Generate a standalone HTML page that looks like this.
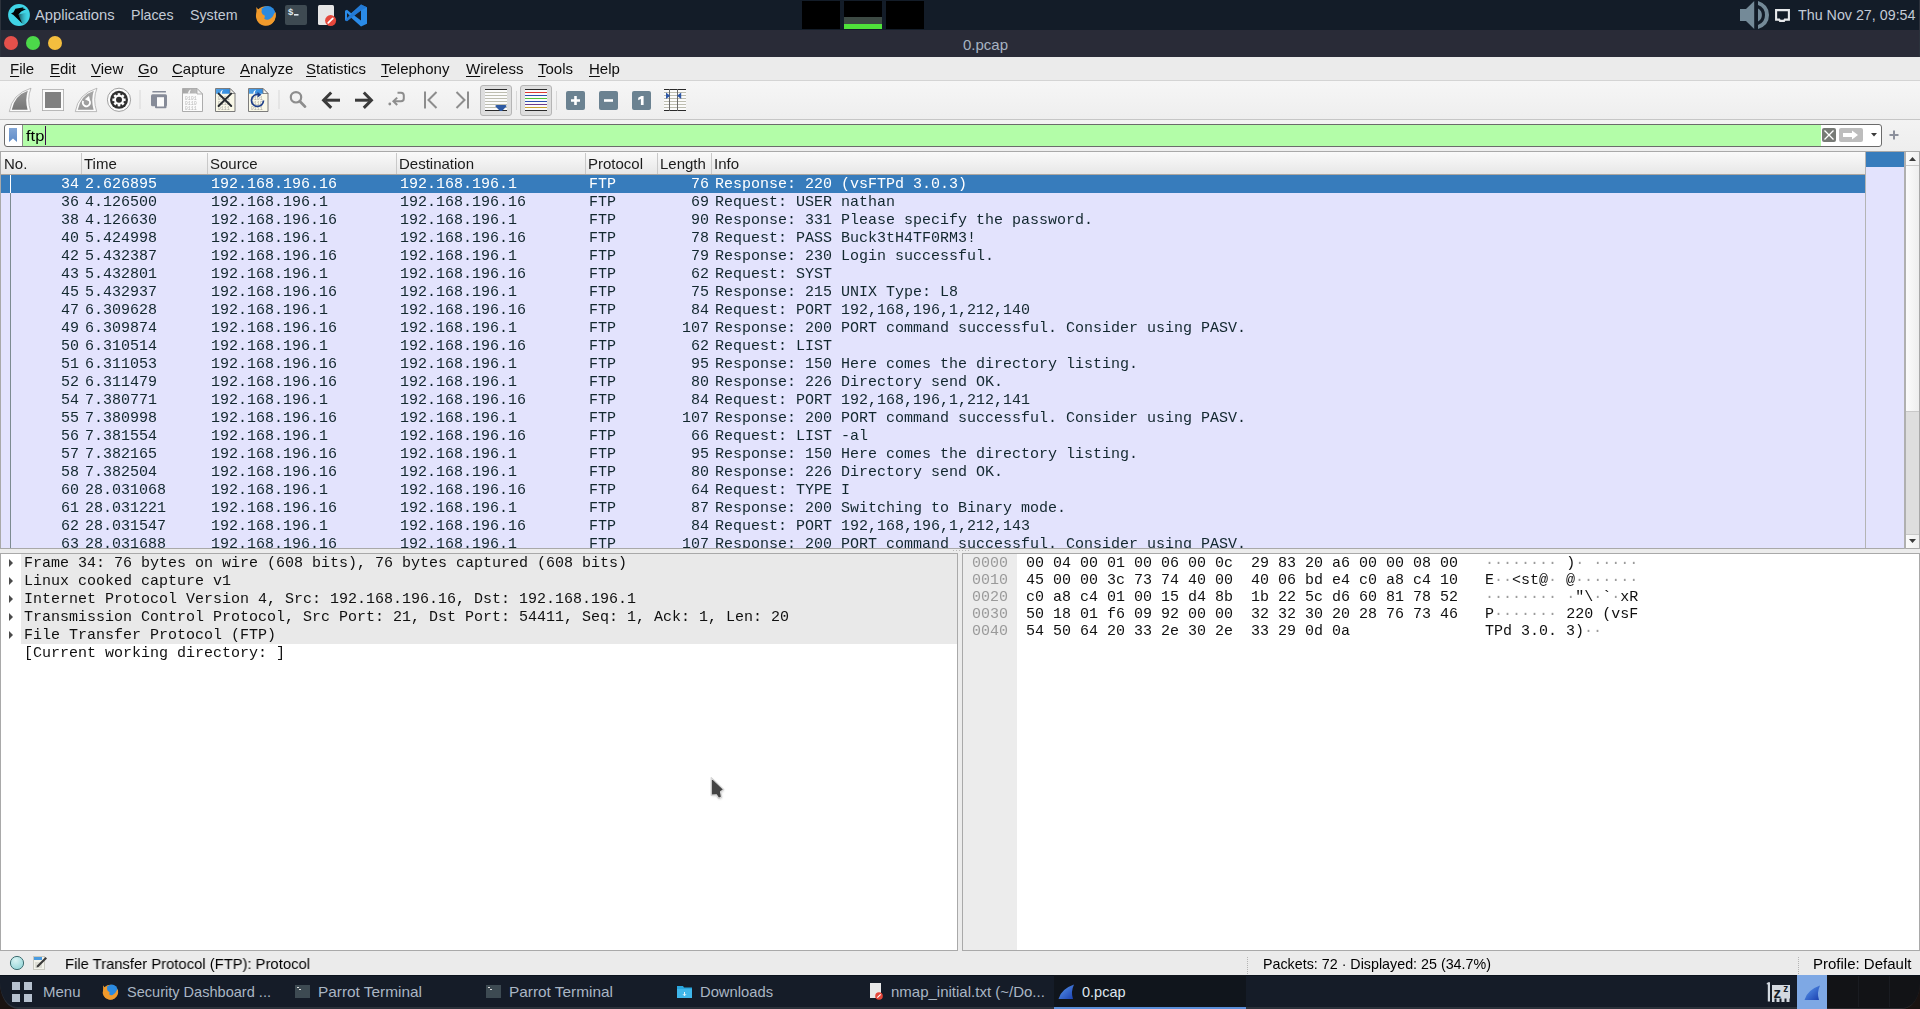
<!DOCTYPE html><html><head><meta charset="utf-8"><style>
*{margin:0;padding:0;box-sizing:border-box}
html,body{width:1920px;height:1009px;overflow:hidden;background:#fff;font-family:"Liberation Sans",sans-serif}
.a{position:absolute}
.t{position:absolute;white-space:pre;font-size:15px;line-height:15px;height:15px}
.m{position:absolute;white-space:pre;font-family:"Liberation Mono",monospace;font-size:15px;line-height:15px;height:15px}
svg{position:absolute;overflow:visible}
</style></head><body><div class="a" style="left:0px;top:0px;width:1920px;height:30px;background:#131c28"></div>
<svg style="left:8px;top:4px" width="22" height="22" viewBox="0 0 22 22"><defs><linearGradient id="pg" x1="0" y1="0" x2="1" y2="0"><stop offset="0" stop-color="#0e3a44" stop-opacity="0.9"/><stop offset="1" stop-color="#40d4e6" stop-opacity="0"/></linearGradient><clipPath id="pc"><circle cx="11" cy="11" r="10.9"/></clipPath></defs><circle cx="11" cy="11" r="10.9" fill="#40d4e6"/><path clip-path="url(#pc)" d="M10.4 10.4 L14.2 19.5 L19 22 L21 8 Z" fill="url(#pg)"/><path d="M3 9.6 L5.5 8.3 L7.4 4.8 L13 3.7 L15.8 3.2 L14.6 4.3 L17.9 5.2 L13.2 7.6 L10.5 10.4 L14.2 19.5 L5.2 10.7 Z" fill="#020405"/></svg>
<div class="t" style="left:35px;top:7px;color:#c3cbd6;font-size:15px;line-height:15px;transform:scaleX(0.9830);transform-origin:0 0;">Applications</div>
<div class="t" style="left:131px;top:7px;color:#c3cbd6;font-size:15px;line-height:15px;transform:scaleX(0.9441);transform-origin:0 0;">Places</div>
<div class="t" style="left:190px;top:7px;color:#c3cbd6;font-size:15px;line-height:15px;transform:scaleX(0.9497);transform-origin:0 0;">System</div>
<svg style="left:255px;top:4px" width="22" height="22" viewBox="0 0 22 22"><path d="M11 2.2 A9.8 9.8 0 1 1 1.6 8.5 L1.3 3 L3.3 5.4 Q6.5 2.2 11 2.2Z" fill="#f09a2c"/><circle cx="12.6" cy="9.6" r="7.6" fill="#2b8ae0"/><path d="M1.5 8.5 Q2.5 5 5 4.6 L6.8 5.5 Q5.8 8.5 7.5 10.2 L9.6 11.5 Q10.5 13.5 9 14.3 Q11 16.6 13.8 15.4 Q17.6 13.8 19.2 9.4 L20.7 8 Q21.6 12.8 19.5 16.4 Q16.5 21.2 10.8 21.2 Q5 21 2.4 16 Q0.8 12.5 1.5 8.5Z" fill="#f09a2c"/></svg>
<div class="a" style="left:285px;top:5px;width:22px;height:20px;background:#3e4a52;border-radius:2px"></div>
<svg style="left:285px;top:5px" width="22" height="20" viewBox="0 0 22 20"><text x="3" y="9.8" font-family="Liberation Sans" font-weight="bold" font-size="9.5" fill="#dfe8ee">$</text><rect x="9" y="9" width="4.5" height="1.6" fill="#dfe8ee"/></svg>
<div class="a" style="left:318px;top:5px;width:16px;height:20px;background:#e6e6e6;border-radius:1.5px"></div>
<svg style="left:325px;top:15px" width="11" height="11" viewBox="0 0 11 11"><circle cx="5.6" cy="5.6" r="5.5" fill="#e5473b"/><path d="M3.2 7.8 L7.8 3.3" stroke="#fff" stroke-width="1.7" stroke-linecap="round"/></svg>
<svg style="left:344px;top:4px" width="24" height="23" viewBox="0 0 24 23"><path d="M17 0.5 L23 3.2 V19.8 L17 22.5 L7.2 13.8 L3 17.2 L1 16.2 V6.8 L3 5.8 L7.2 9.2 Z M17 6.5 L10.3 11.5 L17 16.5 Z M3 9 V14 L5.6 11.5 Z" fill="#2a8be8" fill-rule="evenodd"/><path d="M17 0.5 L23 3.2 L17 6.5 L3 17.2 L1 16.2 Z" fill="#1f72cc" opacity="0.7"/></svg>
<div class="a" style="left:802px;top:1px;width:38px;height:28px;background:#000"></div>
<div class="a" style="left:844px;top:1px;width:38px;height:28px;background:#000"></div>
<div class="a" style="left:844px;top:17px;width:38px;height:7px;background:#3d4a44"></div>
<div class="a" style="left:844px;top:24px;width:38px;height:5px;background:#4fe33a"></div>
<div class="a" style="left:886px;top:1px;width:38px;height:28px;background:#000"></div>
<svg style="left:1735px;top:0" width="60" height="30" viewBox="1735 0 60 30"><path d="M1740 9 H1746 L1754.2 1 V29 L1746 21 H1740 Z" fill="#748a98"/><path d="M1758 8.6 Q1761.9 10.8 1761.9 15 Q1761.9 19.2 1758 21.4 Z" fill="#748a98"/><path d="M1758 1 Q1769 4.5 1769 15 Q1769 25.5 1758 29 V25 Q1765 22.5 1765 15 Q1765 7.5 1758 5 Z" fill="#748a98"/><path d="M1776.1 10.1 H1788.9 V19.6 H1784.8 L1784 20.9 H1780 L1779.2 19.6 H1776.1 Z" fill="none" stroke="#e8eaec" stroke-width="2.1" stroke-linejoin="miter"/></svg>
<div class="t" style="left:1798px;top:7px;color:#c3cbd6;font-size:15px;line-height:15px;transform:scaleX(0.9519);transform-origin:0 0;">Thu Nov 27, 09:54</div>
<div class="a" style="left:0px;top:30px;width:1920px;height:27px;background:#292b37"></div>
<svg style="left:0;top:30px" width="70" height="27"><circle cx="11" cy="13" r="7" fill="#e5504b"/><circle cx="33" cy="13" r="7" fill="#4cd84a"/><circle cx="55" cy="13" r="7" fill="#f4be3e"/></svg>
<div class="t" style="left:963px;top:37px;color:#a7b3c2;font-size:15px;line-height:15px;">0.pcap</div>
<div class="a" style="left:0px;top:0px;width:1px;height:57px;background:#2c323c"></div>
<div class="a" style="left:1919px;top:0px;width:1px;height:57px;background:#2c323c"></div>
<div class="a" style="left:0;top:0;width:1920px;height:1009px;will-change:transform">
<div class="a" style="left:0px;top:57px;width:1920px;height:23px;background:#ebebeb"></div>
<div class="a" style="left:0px;top:80px;width:1920px;height:1px;background:#d4d4d4"></div>
<div class="t" style="left:10px;top:61px;color:#0d0d0d;font-size:15px;line-height:15px;"><span style="text-decoration:underline;text-underline-offset:2px">F</span>ile</div>
<div class="t" style="left:50px;top:61px;color:#0d0d0d;font-size:15px;line-height:15px;"><span style="text-decoration:underline;text-underline-offset:2px">E</span>dit</div>
<div class="t" style="left:91px;top:61px;color:#0d0d0d;font-size:15px;line-height:15px;"><span style="text-decoration:underline;text-underline-offset:2px">V</span>iew</div>
<div class="t" style="left:138px;top:61px;color:#0d0d0d;font-size:15px;line-height:15px;"><span style="text-decoration:underline;text-underline-offset:2px">G</span>o</div>
<div class="t" style="left:172px;top:61px;color:#0d0d0d;font-size:15px;line-height:15px;"><span style="text-decoration:underline;text-underline-offset:2px">C</span>apture</div>
<div class="t" style="left:240px;top:61px;color:#0d0d0d;font-size:15px;line-height:15px;"><span style="text-decoration:underline;text-underline-offset:2px">A</span>nalyze</div>
<div class="t" style="left:306px;top:61px;color:#0d0d0d;font-size:15px;line-height:15px;"><span style="text-decoration:underline;text-underline-offset:2px">S</span>tatistics</div>
<div class="t" style="left:381px;top:61px;color:#0d0d0d;font-size:15px;line-height:15px;"><span style="text-decoration:underline;text-underline-offset:2px">T</span>elephony</div>
<div class="t" style="left:466px;top:61px;color:#0d0d0d;font-size:15px;line-height:15px;"><span style="text-decoration:underline;text-underline-offset:2px">W</span>ireless</div>
<div class="t" style="left:538px;top:61px;color:#0d0d0d;font-size:15px;line-height:15px;"><span style="text-decoration:underline;text-underline-offset:2px">T</span>ools</div>
<div class="t" style="left:589px;top:61px;color:#0d0d0d;font-size:15px;line-height:15px;"><span style="text-decoration:underline;text-underline-offset:2px">H</span>elp</div>
<div class="a" style="left:0px;top:81px;width:1920px;height:39px;background:linear-gradient(#f6f6f6,#eeeeee)"></div>
<div class="a" style="left:0px;top:119px;width:1920px;height:1px;background:#c6c6c6"></div>

<svg style="left:0;top:81px" width="700" height="39" viewBox="0 81 700 39">
<!-- shark fin -->
<defs><linearGradient id="fg1" x1="0" y1="0" x2="0" y2="1"><stop offset="0" stop-color="#959595"/><stop offset="1" stop-color="#767676"/></linearGradient>
<linearGradient id="fg2" x1="0" y1="0" x2="0" y2="1"><stop offset="0" stop-color="#a8a8a8"/><stop offset="1" stop-color="#9a9a9a"/></linearGradient></defs>
<path d="M9.3 111.6 Q12 94 31 88.2 Q26.5 99 30.7 111.6 Z" fill="#fbfbfb" stroke="#aaaaaa" stroke-width="0.8"/>
<path d="M11.8 109.8 Q14.5 95.5 27.8 90.8 Q24.8 100 27.6 109.8 Z" fill="url(#fg1)"/>
<!-- stop -->
<rect x="42.4" y="89.4" width="21.2" height="21.2" fill="#fbfbfb" stroke="#aaaaaa" stroke-width="0.8"/>
<rect x="45" y="92" width="16" height="16" fill="#808080"/>
<!-- restart fin -->
<path d="M75.3 111.6 Q78 94 97 88.2 Q92.5 99 96.7 111.6 Z" fill="#fbfbfb" stroke="#aaaaaa" stroke-width="0.8"/>
<path d="M77.8 109.8 Q80.5 95.5 93.8 90.8 Q90.8 100 93.6 109.8 Z" fill="url(#fg2)"/>
<path d="M83.2 101 A3.6 3.6 0 1 0 88.2 99.5" fill="none" stroke="#fff" stroke-width="1.9"/>
<path d="M85.5 99.2 L88.8 96.5 L89.6 101Z" fill="#fff" stroke="#fff" stroke-width="0.8"/>
<!-- gear -->
<circle cx="119" cy="99.8" r="11.6" fill="#fbfbfb" stroke="#8a8a8a" stroke-width="0.8"/>
<circle cx="119" cy="99.8" r="9" fill="#2e2e2e"/>
<g transform="translate(119 99.8)" fill="#fbfbfb">
<circle r="5"/>
<rect x="-1.3" y="-6.6" width="2.6" height="13.2"/>
<rect x="-6.6" y="-1.3" width="13.2" height="2.6"/>
<rect x="-1.3" y="-6.6" width="2.6" height="13.2" transform="rotate(45)"/>
<rect x="-6.6" y="-1.3" width="13.2" height="2.6" transform="rotate(45)"/>
</g>
<circle cx="119" cy="99.8" r="3" fill="#2e2e2e"/>
<!-- sep -->
<rect x="139.5" y="90" width="1" height="19" fill="#d8d8d8"/>
<!-- open -->
<rect x="152.3" y="91" width="13.7" height="1.6" rx="0.5" fill="#868b98"/>
<rect x="151" y="94.3" width="16" height="12" rx="1.5" fill="#868b98"/>
<rect x="155" y="96" width="11.5" height="12.3" rx="1" fill="#868b98"/>
<rect x="157" y="97.2" width="7" height="9.3" fill="#fbfbfb"/>
<!-- file (save) -->
<defs><linearGradient id="gb" x1="0" y1="0" x2="1" y2="0"><stop offset="0" stop-color="#4f9fe4"/><stop offset="1" stop-color="#2f8ae0"/></linearGradient>
<linearGradient id="gg" x1="0" y1="0" x2="1" y2="0"><stop offset="0" stop-color="#a6a6a6"/><stop offset="1" stop-color="#bdbdbd"/></linearGradient></defs>
<path d="M182.5 88.5 H197 L202.5 94 V111.5 H182.5Z" fill="#fbfbfb" stroke="#a4a4a4" stroke-width="0.9"/>
<path d="M183 89 H196.8 L198 93.5 H183Z" fill="url(#gg)"/>
<path d="M188 93.5 Q188.5 90 191 89.5 Q189.5 91.5 190 93.5Z" fill="#fbfbfb"/>
<path d="M197 88.5 L202.5 94 H197Z" fill="#f4f4f4" stroke="#a4a4a4" stroke-width="0.8"/>
<g font-family="Liberation Mono" font-size="5" fill="#b8b8b8"><text x="184.8" y="99.5">0101</text><text x="184.8" y="104.5">0110</text><text x="184.8" y="109.5">0111</text></g>
<!-- close file -->
<path d="M215.5 88.5 H230 L235 93.5 V111.5 H215.5Z" fill="#f9f8e8" stroke="#6e6e6e" stroke-width="0.9"/>
<path d="M216 89 H229.8 L231 93.8 H216Z" fill="url(#gb)"/>
<path d="M220 93.8 Q220.5 90.5 223 89.8 Q221.5 92 222 93.8Z" fill="#fbfbfb"/>
<path d="M230 88.5 L235 93.5 H230Z" fill="#f6f6f0" stroke="#6e6e6e" stroke-width="0.8"/>
<g font-family="Liberation Mono" font-size="5" fill="#a8a8a0"><text x="217.8" y="99.5">0101</text><text x="217.8" y="104.5">0110</text><text x="217.8" y="109.5">0111</text></g>
<path d="M218.6 93.6 L231.2 106 M231.2 93.6 L218.6 106" stroke="#262a2e" stroke-width="2" stroke-linecap="round"/>
<!-- reload -->
<path d="M248.5 88.5 H263 L268 93.5 V111.5 H248.5Z" fill="#f9f8e8" stroke="#6e6e6e" stroke-width="0.9"/>
<path d="M249 89 H262.8 L264 93.8 H249Z" fill="url(#gb)"/>
<path d="M253 93.8 Q253.5 90.5 256 89.8 Q254.5 92 255 93.8Z" fill="#fbfbfb"/>
<path d="M263 88.5 L268 93.5 H263Z" fill="#f6f6f0" stroke="#6e6e6e" stroke-width="0.8"/>
<g font-family="Liberation Mono" font-size="5" fill="#a8a8a0"><text x="250.8" y="99.5">0101</text><text x="250.8" y="104.5">0110</text><text x="250.8" y="109.5">0111</text></g>
<path d="M263.5 100.5 A6 6 0 1 1 258.5 94.5" fill="none" stroke="#1d3f8a" stroke-width="1.7"/>
<path d="M257.5 92 L261.5 94.8 L257.5 97.5Z" fill="#1d3f8a"/>
<!-- sep -->
<rect x="278.5" y="90" width="1" height="19" fill="#d8d8d8"/>
<!-- search -->
<circle cx="296" cy="97.3" r="5.2" fill="none" stroke="#8d8d8d" stroke-width="2.2"/>
<path d="M299.8 101.2 L305 106.6" stroke="#8d8d8d" stroke-width="2.8" stroke-linecap="round"/>
<!-- back -->
<path d="M340 100.2 H325.5" stroke="#3a3a3a" stroke-width="3"/>
<path d="M331.2 92.5 L323.6 100.2 L331.2 107.9" fill="none" stroke="#3a3a3a" stroke-width="3"/>
<!-- forward -->
<path d="M355 100.2 H369.5" stroke="#3a3a3a" stroke-width="3"/>
<path d="M363.8 92.5 L371.4 100.2 L363.8 107.9" fill="none" stroke="#3a3a3a" stroke-width="3"/>
<!-- go to packet -->
<circle cx="389.8" cy="104" r="1.4" fill="#8d8d8d"/>
<path d="M397.5 92.8 H401 Q403.8 92.8 403.8 95.6 V98.5 Q403.8 101.3 401 101.3 H394.5" fill="none" stroke="#8d8d8d" stroke-width="2"/>
<path d="M397.2 97.6 L393.4 101.3 L397.2 105" fill="none" stroke="#8d8d8d" stroke-width="2"/>
<!-- first -->
<path d="M425 91.5 V108.5" stroke="#8d8d8d" stroke-width="2"/>
<path d="M436.5 92 L428.5 100 L436.5 108" fill="none" stroke="#8d8d8d" stroke-width="2"/>
<!-- last -->
<path d="M468 91.5 V108.5" stroke="#8d8d8d" stroke-width="2"/>
<path d="M456.5 92 L464.5 100 L456.5 108" fill="none" stroke="#8d8d8d" stroke-width="2"/>
<!-- autoscroll pressed -->
<rect x="480.5" y="85.5" width="31" height="30" rx="2.5" fill="#dedede" stroke="#b5b5b5"/><rect x="485" y="89" width="22" height="22" fill="#fbfbfb"/>
<g fill="#2a2a2a"><rect x="485" y="89" width="22" height="1"/><rect x="485" y="110" width="22" height="1"/></g>
<g fill="#bdbdb0"><rect x="485" y="92" width="22" height="1"/><rect x="485" y="95" width="22" height="1"/><rect x="485" y="98" width="22" height="1"/><rect x="485" y="101" width="22" height="1"/><rect x="485" y="104" width="22" height="1"/><rect x="485" y="107" width="22" height="1"/></g>
<path d="M495.3 106.3 Q495.3 105 497 105 H505 Q506.6 105 506.6 106.3 L502 111 H500 Z" fill="#2e5aa3"/>
<!-- sep -->
<rect x="516" y="91" width="1" height="19" fill="#d8d8d8"/>
<!-- colorize pressed -->
<rect x="520.5" y="85.5" width="31" height="30" rx="2.5" fill="#dedede" stroke="#b5b5b5"/><rect x="525" y="89" width="22" height="22" fill="#fbfbfb"/>
<rect x="525" y="89" width="22" height="1" fill="#2a2a2a"/>
<rect x="525" y="92" width="22" height="1" fill="#dd3a32"/>
<rect x="525" y="95" width="22" height="1" fill="#2d4fae"/>
<rect x="525" y="98" width="22" height="1" fill="#4fc23a"/>
<rect x="525" y="101" width="22" height="1" fill="#2d4fae"/>
<rect x="525" y="104" width="22" height="1" fill="#6b3a8a"/>
<rect x="525" y="107" width="22" height="1" fill="#c9a030"/>
<rect x="525" y="110" width="22" height="1" fill="#2a2a2a"/>
<!-- sep -->
<rect x="556" y="91" width="1" height="19" fill="#d8d8d8"/>
<!-- zoom in -->
<rect x="566" y="91" width="19" height="19" rx="2" fill="#6b8291"/>
<path d="M571 100.5 H580 M575.5 96 V105" stroke="#fff" stroke-width="2.6"/>
<!-- zoom out -->
<rect x="599" y="91" width="19" height="19" rx="2" fill="#6b8291"/>
<path d="M604 100.5 H613" stroke="#fff" stroke-width="2.6"/>
<!-- normal size -->
<rect x="632" y="91" width="19" height="19" rx="2" fill="#6b8291"/>
<path d="M638.2 97.8 L641.3 95.9 H643.6 V105 H640.9 V99 L638.2 100.3 Z" fill="#fff"/>
<!-- resize columns -->
<rect x="664" y="89" width="22" height="22" fill="#fbfbfb"/>
<g fill="#bdbdb0"><rect x="664" y="92" width="22" height="1"/><rect x="664" y="95" width="22" height="1"/><rect x="664" y="98" width="22" height="1"/><rect x="664" y="101" width="22" height="1"/><rect x="664" y="104" width="22" height="1"/><rect x="664" y="107" width="22" height="1"/></g>
<g fill="#2a2a2a"><rect x="664" y="89" width="22" height="1"/><rect x="664" y="110" width="22" height="1"/></g>
<g fill="#6a6a6a"><rect x="669" y="89" width="1" height="22"/><rect x="677" y="89" width="1" height="22"/></g>
<path d="M666 92.6 L670.2 95.8 L666 99 Z M681.2 92.6 L677 95.8 L681.2 99 Z" fill="#2f58a6"/>
</svg>

<div class="a" style="left:0px;top:120px;width:1920px;height:31px;background:linear-gradient(#f3f3f3,#eeeeee)"></div>
<div class="a" style="left:4px;top:124px;width:1878px;height:23px;background:#fff;border:1px solid #6b6b6b;border-radius:3px"></div>
<div class="a" style="left:23px;top:125px;width:1798px;height:21px;background:#b3fda8"></div>
<div class="a" style="left:22px;top:125px;width:1px;height:21px;background:#8a8a8a"></div>
<svg style="left:9px;top:128px" width="9" height="15" viewBox="0 0 9 15"><defs><linearGradient id="bm" x1="0" y1="0" x2="0" y2="1"><stop offset="0" stop-color="#83a6d6"/><stop offset="1" stop-color="#5f8cc8"/></linearGradient></defs><path d="M0 0 H8 V14 L4 10.5 L0 14Z" fill="url(#bm)"/></svg>
<div class="t" style="left:26px;top:128px;color:#000;font-size:15px;line-height:15px;transform:scaleX(1.0966);transform-origin:0 0;">ftp</div>
<div class="a" style="left:45px;top:126px;width:1px;height:19px;background:#3a0a48"></div>
<svg style="left:1822px;top:128px" width="80" height="14" viewBox="1822 128 80 14"><rect x="1822" y="128" width="14" height="14" rx="2" fill="#777a76"/><path d="M1824.5 130.5 L1833.5 139.5 M1833.5 130.5 L1824.5 139.5" stroke="#fff" stroke-width="1.3"/><rect x="1839" y="128" width="24" height="14" rx="2" fill="#bdbdbd"/><path d="M1843 133 H1852 V130.5 L1858 135 L1852 139.5 V137 H1843Z" fill="#fff"/><path d="M1871 133 H1877 L1874 136.5Z" fill="#3a3a3a"/><path d="M1889.5 135 H1898.5 M1894 130.5 V139.5" stroke="#8c909c" stroke-width="2"/></svg>
<div class="a" style="left:0px;top:151px;width:1920px;height:1px;background:#a9a9a9"></div>
<div class="a" style="left:0px;top:151px;width:1px;height:398px;background:#a9a9a9"></div>
<div class="a" style="left:1px;top:152px;width:1865px;height:23px;background:linear-gradient(#fafafa,#e6e6e6)"></div>
<div class="a" style="left:1px;top:174px;width:1865px;height:1px;background:#aca69f"></div>
<div class="a" style="left:81px;top:153px;width:1px;height:21px;background:#c9c9c9"></div>
<div class="a" style="left:207px;top:153px;width:1px;height:21px;background:#c9c9c9"></div>
<div class="a" style="left:396px;top:153px;width:1px;height:21px;background:#c9c9c9"></div>
<div class="a" style="left:585px;top:153px;width:1px;height:21px;background:#c9c9c9"></div>
<div class="a" style="left:657px;top:153px;width:1px;height:21px;background:#c9c9c9"></div>
<div class="a" style="left:711px;top:153px;width:1px;height:21px;background:#c9c9c9"></div>
<div class="a" style="left:1865px;top:152px;width:1px;height:397px;background:#b4b4b4"></div>
<div class="t" style="left:4px;top:156px;color:#1b1b1b;font-size:15px;line-height:15px;">No.</div>
<div class="t" style="left:84px;top:156px;color:#1b1b1b;font-size:15px;line-height:15px;">Time</div>
<div class="t" style="left:210px;top:156px;color:#1b1b1b;font-size:15px;line-height:15px;">Source</div>
<div class="t" style="left:399px;top:156px;color:#1b1b1b;font-size:15px;line-height:15px;">Destination</div>
<div class="t" style="left:588px;top:156px;color:#1b1b1b;font-size:15px;line-height:15px;">Protocol</div>
<div class="t" style="left:660px;top:156px;color:#1b1b1b;font-size:15px;line-height:15px;">Length</div>
<div class="t" style="left:714px;top:156px;color:#1b1b1b;font-size:15px;line-height:15px;">Info</div>
<div class="a" style="left:1px;top:175px;width:1864px;height:373px;overflow:hidden;background:#e3e3fd">
<div class="a" style="left:0;top:0px;width:1864px;height:18px;background:#377cbc;color:#ffffff">
<div class="a" style="left:9px;top:0;width:1px;height:18px;background:#fff"></div>
<div class="m" style="right:1786px;top:2px;color:#ffffff">34</div>
<div class="m" style="left:84px;top:2px;color:#ffffff">2.626895</div>
<div class="m" style="left:210px;top:2px;color:#ffffff">192.168.196.16</div>
<div class="m" style="left:399px;top:2px;color:#ffffff">192.168.196.1</div>
<div class="m" style="left:588px;top:2px;color:#ffffff">FTP</div>
<div class="m" style="right:1156px;top:2px;color:#ffffff">76</div>
<div class="m" style="left:714px;top:2px;color:#ffffff">Response: 220 (vsFTPd 3.0.3)</div>
</div>
<div class="a" style="left:0;top:18px;width:1864px;height:18px;background:#e3e3fd;color:#12272e">
<div class="a" style="left:9px;top:0;width:1px;height:18px;background:#7d8b91"></div>
<div class="m" style="right:1786px;top:2px;color:#12272e">36</div>
<div class="m" style="left:84px;top:2px;color:#12272e">4.126500</div>
<div class="m" style="left:210px;top:2px;color:#12272e">192.168.196.1</div>
<div class="m" style="left:399px;top:2px;color:#12272e">192.168.196.16</div>
<div class="m" style="left:588px;top:2px;color:#12272e">FTP</div>
<div class="m" style="right:1156px;top:2px;color:#12272e">69</div>
<div class="m" style="left:714px;top:2px;color:#12272e">Request: USER nathan</div>
</div>
<div class="a" style="left:0;top:36px;width:1864px;height:18px;background:#e3e3fd;color:#12272e">
<div class="a" style="left:9px;top:0;width:1px;height:18px;background:#7d8b91"></div>
<div class="m" style="right:1786px;top:2px;color:#12272e">38</div>
<div class="m" style="left:84px;top:2px;color:#12272e">4.126630</div>
<div class="m" style="left:210px;top:2px;color:#12272e">192.168.196.16</div>
<div class="m" style="left:399px;top:2px;color:#12272e">192.168.196.1</div>
<div class="m" style="left:588px;top:2px;color:#12272e">FTP</div>
<div class="m" style="right:1156px;top:2px;color:#12272e">90</div>
<div class="m" style="left:714px;top:2px;color:#12272e">Response: 331 Please specify the password.</div>
</div>
<div class="a" style="left:0;top:54px;width:1864px;height:18px;background:#e3e3fd;color:#12272e">
<div class="a" style="left:9px;top:0;width:1px;height:18px;background:#7d8b91"></div>
<div class="m" style="right:1786px;top:2px;color:#12272e">40</div>
<div class="m" style="left:84px;top:2px;color:#12272e">5.424998</div>
<div class="m" style="left:210px;top:2px;color:#12272e">192.168.196.1</div>
<div class="m" style="left:399px;top:2px;color:#12272e">192.168.196.16</div>
<div class="m" style="left:588px;top:2px;color:#12272e">FTP</div>
<div class="m" style="right:1156px;top:2px;color:#12272e">78</div>
<div class="m" style="left:714px;top:2px;color:#12272e">Request: PASS Buck3tH4TF0RM3!</div>
</div>
<div class="a" style="left:0;top:72px;width:1864px;height:18px;background:#e3e3fd;color:#12272e">
<div class="a" style="left:9px;top:0;width:1px;height:18px;background:#7d8b91"></div>
<div class="m" style="right:1786px;top:2px;color:#12272e">42</div>
<div class="m" style="left:84px;top:2px;color:#12272e">5.432387</div>
<div class="m" style="left:210px;top:2px;color:#12272e">192.168.196.16</div>
<div class="m" style="left:399px;top:2px;color:#12272e">192.168.196.1</div>
<div class="m" style="left:588px;top:2px;color:#12272e">FTP</div>
<div class="m" style="right:1156px;top:2px;color:#12272e">79</div>
<div class="m" style="left:714px;top:2px;color:#12272e">Response: 230 Login successful.</div>
</div>
<div class="a" style="left:0;top:90px;width:1864px;height:18px;background:#e3e3fd;color:#12272e">
<div class="a" style="left:9px;top:0;width:1px;height:18px;background:#7d8b91"></div>
<div class="m" style="right:1786px;top:2px;color:#12272e">43</div>
<div class="m" style="left:84px;top:2px;color:#12272e">5.432801</div>
<div class="m" style="left:210px;top:2px;color:#12272e">192.168.196.1</div>
<div class="m" style="left:399px;top:2px;color:#12272e">192.168.196.16</div>
<div class="m" style="left:588px;top:2px;color:#12272e">FTP</div>
<div class="m" style="right:1156px;top:2px;color:#12272e">62</div>
<div class="m" style="left:714px;top:2px;color:#12272e">Request: SYST</div>
</div>
<div class="a" style="left:0;top:108px;width:1864px;height:18px;background:#e3e3fd;color:#12272e">
<div class="a" style="left:9px;top:0;width:1px;height:18px;background:#7d8b91"></div>
<div class="m" style="right:1786px;top:2px;color:#12272e">45</div>
<div class="m" style="left:84px;top:2px;color:#12272e">5.432937</div>
<div class="m" style="left:210px;top:2px;color:#12272e">192.168.196.16</div>
<div class="m" style="left:399px;top:2px;color:#12272e">192.168.196.1</div>
<div class="m" style="left:588px;top:2px;color:#12272e">FTP</div>
<div class="m" style="right:1156px;top:2px;color:#12272e">75</div>
<div class="m" style="left:714px;top:2px;color:#12272e">Response: 215 UNIX Type: L8</div>
</div>
<div class="a" style="left:0;top:126px;width:1864px;height:18px;background:#e3e3fd;color:#12272e">
<div class="a" style="left:9px;top:0;width:1px;height:18px;background:#7d8b91"></div>
<div class="m" style="right:1786px;top:2px;color:#12272e">47</div>
<div class="m" style="left:84px;top:2px;color:#12272e">6.309628</div>
<div class="m" style="left:210px;top:2px;color:#12272e">192.168.196.1</div>
<div class="m" style="left:399px;top:2px;color:#12272e">192.168.196.16</div>
<div class="m" style="left:588px;top:2px;color:#12272e">FTP</div>
<div class="m" style="right:1156px;top:2px;color:#12272e">84</div>
<div class="m" style="left:714px;top:2px;color:#12272e">Request: PORT 192,168,196,1,212,140</div>
</div>
<div class="a" style="left:0;top:144px;width:1864px;height:18px;background:#e3e3fd;color:#12272e">
<div class="a" style="left:9px;top:0;width:1px;height:18px;background:#7d8b91"></div>
<div class="m" style="right:1786px;top:2px;color:#12272e">49</div>
<div class="m" style="left:84px;top:2px;color:#12272e">6.309874</div>
<div class="m" style="left:210px;top:2px;color:#12272e">192.168.196.16</div>
<div class="m" style="left:399px;top:2px;color:#12272e">192.168.196.1</div>
<div class="m" style="left:588px;top:2px;color:#12272e">FTP</div>
<div class="m" style="right:1156px;top:2px;color:#12272e">107</div>
<div class="m" style="left:714px;top:2px;color:#12272e">Response: 200 PORT command successful. Consider using PASV.</div>
</div>
<div class="a" style="left:0;top:162px;width:1864px;height:18px;background:#e3e3fd;color:#12272e">
<div class="a" style="left:9px;top:0;width:1px;height:18px;background:#7d8b91"></div>
<div class="m" style="right:1786px;top:2px;color:#12272e">50</div>
<div class="m" style="left:84px;top:2px;color:#12272e">6.310514</div>
<div class="m" style="left:210px;top:2px;color:#12272e">192.168.196.1</div>
<div class="m" style="left:399px;top:2px;color:#12272e">192.168.196.16</div>
<div class="m" style="left:588px;top:2px;color:#12272e">FTP</div>
<div class="m" style="right:1156px;top:2px;color:#12272e">62</div>
<div class="m" style="left:714px;top:2px;color:#12272e">Request: LIST</div>
</div>
<div class="a" style="left:0;top:180px;width:1864px;height:18px;background:#e3e3fd;color:#12272e">
<div class="a" style="left:9px;top:0;width:1px;height:18px;background:#7d8b91"></div>
<div class="m" style="right:1786px;top:2px;color:#12272e">51</div>
<div class="m" style="left:84px;top:2px;color:#12272e">6.311053</div>
<div class="m" style="left:210px;top:2px;color:#12272e">192.168.196.16</div>
<div class="m" style="left:399px;top:2px;color:#12272e">192.168.196.1</div>
<div class="m" style="left:588px;top:2px;color:#12272e">FTP</div>
<div class="m" style="right:1156px;top:2px;color:#12272e">95</div>
<div class="m" style="left:714px;top:2px;color:#12272e">Response: 150 Here comes the directory listing.</div>
</div>
<div class="a" style="left:0;top:198px;width:1864px;height:18px;background:#e3e3fd;color:#12272e">
<div class="a" style="left:9px;top:0;width:1px;height:18px;background:#7d8b91"></div>
<div class="m" style="right:1786px;top:2px;color:#12272e">52</div>
<div class="m" style="left:84px;top:2px;color:#12272e">6.311479</div>
<div class="m" style="left:210px;top:2px;color:#12272e">192.168.196.16</div>
<div class="m" style="left:399px;top:2px;color:#12272e">192.168.196.1</div>
<div class="m" style="left:588px;top:2px;color:#12272e">FTP</div>
<div class="m" style="right:1156px;top:2px;color:#12272e">80</div>
<div class="m" style="left:714px;top:2px;color:#12272e">Response: 226 Directory send OK.</div>
</div>
<div class="a" style="left:0;top:216px;width:1864px;height:18px;background:#e3e3fd;color:#12272e">
<div class="a" style="left:9px;top:0;width:1px;height:18px;background:#7d8b91"></div>
<div class="m" style="right:1786px;top:2px;color:#12272e">54</div>
<div class="m" style="left:84px;top:2px;color:#12272e">7.380771</div>
<div class="m" style="left:210px;top:2px;color:#12272e">192.168.196.1</div>
<div class="m" style="left:399px;top:2px;color:#12272e">192.168.196.16</div>
<div class="m" style="left:588px;top:2px;color:#12272e">FTP</div>
<div class="m" style="right:1156px;top:2px;color:#12272e">84</div>
<div class="m" style="left:714px;top:2px;color:#12272e">Request: PORT 192,168,196,1,212,141</div>
</div>
<div class="a" style="left:0;top:234px;width:1864px;height:18px;background:#e3e3fd;color:#12272e">
<div class="a" style="left:9px;top:0;width:1px;height:18px;background:#7d8b91"></div>
<div class="m" style="right:1786px;top:2px;color:#12272e">55</div>
<div class="m" style="left:84px;top:2px;color:#12272e">7.380998</div>
<div class="m" style="left:210px;top:2px;color:#12272e">192.168.196.16</div>
<div class="m" style="left:399px;top:2px;color:#12272e">192.168.196.1</div>
<div class="m" style="left:588px;top:2px;color:#12272e">FTP</div>
<div class="m" style="right:1156px;top:2px;color:#12272e">107</div>
<div class="m" style="left:714px;top:2px;color:#12272e">Response: 200 PORT command successful. Consider using PASV.</div>
</div>
<div class="a" style="left:0;top:252px;width:1864px;height:18px;background:#e3e3fd;color:#12272e">
<div class="a" style="left:9px;top:0;width:1px;height:18px;background:#7d8b91"></div>
<div class="m" style="right:1786px;top:2px;color:#12272e">56</div>
<div class="m" style="left:84px;top:2px;color:#12272e">7.381554</div>
<div class="m" style="left:210px;top:2px;color:#12272e">192.168.196.1</div>
<div class="m" style="left:399px;top:2px;color:#12272e">192.168.196.16</div>
<div class="m" style="left:588px;top:2px;color:#12272e">FTP</div>
<div class="m" style="right:1156px;top:2px;color:#12272e">66</div>
<div class="m" style="left:714px;top:2px;color:#12272e">Request: LIST -al</div>
</div>
<div class="a" style="left:0;top:270px;width:1864px;height:18px;background:#e3e3fd;color:#12272e">
<div class="a" style="left:9px;top:0;width:1px;height:18px;background:#7d8b91"></div>
<div class="m" style="right:1786px;top:2px;color:#12272e">57</div>
<div class="m" style="left:84px;top:2px;color:#12272e">7.382165</div>
<div class="m" style="left:210px;top:2px;color:#12272e">192.168.196.16</div>
<div class="m" style="left:399px;top:2px;color:#12272e">192.168.196.1</div>
<div class="m" style="left:588px;top:2px;color:#12272e">FTP</div>
<div class="m" style="right:1156px;top:2px;color:#12272e">95</div>
<div class="m" style="left:714px;top:2px;color:#12272e">Response: 150 Here comes the directory listing.</div>
</div>
<div class="a" style="left:0;top:288px;width:1864px;height:18px;background:#e3e3fd;color:#12272e">
<div class="a" style="left:9px;top:0;width:1px;height:18px;background:#7d8b91"></div>
<div class="m" style="right:1786px;top:2px;color:#12272e">58</div>
<div class="m" style="left:84px;top:2px;color:#12272e">7.382504</div>
<div class="m" style="left:210px;top:2px;color:#12272e">192.168.196.16</div>
<div class="m" style="left:399px;top:2px;color:#12272e">192.168.196.1</div>
<div class="m" style="left:588px;top:2px;color:#12272e">FTP</div>
<div class="m" style="right:1156px;top:2px;color:#12272e">80</div>
<div class="m" style="left:714px;top:2px;color:#12272e">Response: 226 Directory send OK.</div>
</div>
<div class="a" style="left:0;top:306px;width:1864px;height:18px;background:#e3e3fd;color:#12272e">
<div class="a" style="left:9px;top:0;width:1px;height:18px;background:#7d8b91"></div>
<div class="m" style="right:1786px;top:2px;color:#12272e">60</div>
<div class="m" style="left:84px;top:2px;color:#12272e">28.031068</div>
<div class="m" style="left:210px;top:2px;color:#12272e">192.168.196.1</div>
<div class="m" style="left:399px;top:2px;color:#12272e">192.168.196.16</div>
<div class="m" style="left:588px;top:2px;color:#12272e">FTP</div>
<div class="m" style="right:1156px;top:2px;color:#12272e">64</div>
<div class="m" style="left:714px;top:2px;color:#12272e">Request: TYPE I</div>
</div>
<div class="a" style="left:0;top:324px;width:1864px;height:18px;background:#e3e3fd;color:#12272e">
<div class="a" style="left:9px;top:0;width:1px;height:18px;background:#7d8b91"></div>
<div class="m" style="right:1786px;top:2px;color:#12272e">61</div>
<div class="m" style="left:84px;top:2px;color:#12272e">28.031221</div>
<div class="m" style="left:210px;top:2px;color:#12272e">192.168.196.16</div>
<div class="m" style="left:399px;top:2px;color:#12272e">192.168.196.1</div>
<div class="m" style="left:588px;top:2px;color:#12272e">FTP</div>
<div class="m" style="right:1156px;top:2px;color:#12272e">87</div>
<div class="m" style="left:714px;top:2px;color:#12272e">Response: 200 Switching to Binary mode.</div>
</div>
<div class="a" style="left:0;top:342px;width:1864px;height:18px;background:#e3e3fd;color:#12272e">
<div class="a" style="left:9px;top:0;width:1px;height:18px;background:#7d8b91"></div>
<div class="m" style="right:1786px;top:2px;color:#12272e">62</div>
<div class="m" style="left:84px;top:2px;color:#12272e">28.031547</div>
<div class="m" style="left:210px;top:2px;color:#12272e">192.168.196.1</div>
<div class="m" style="left:399px;top:2px;color:#12272e">192.168.196.16</div>
<div class="m" style="left:588px;top:2px;color:#12272e">FTP</div>
<div class="m" style="right:1156px;top:2px;color:#12272e">84</div>
<div class="m" style="left:714px;top:2px;color:#12272e">Request: PORT 192,168,196,1,212,143</div>
</div>
<div class="a" style="left:0;top:360px;width:1864px;height:18px;background:#e3e3fd;color:#12272e">
<div class="a" style="left:9px;top:0;width:1px;height:18px;background:#7d8b91"></div>
<div class="m" style="right:1786px;top:2px;color:#12272e">63</div>
<div class="m" style="left:84px;top:2px;color:#12272e">28.031688</div>
<div class="m" style="left:210px;top:2px;color:#12272e">192.168.196.16</div>
<div class="m" style="left:399px;top:2px;color:#12272e">192.168.196.1</div>
<div class="m" style="left:588px;top:2px;color:#12272e">FTP</div>
<div class="m" style="right:1156px;top:2px;color:#12272e">107</div>
<div class="m" style="left:714px;top:2px;color:#12272e">Response: 200 PORT command successful. Consider using PASV.</div>
</div>
</div>
<div class="a" style="left:1px;top:548px;width:1919px;height:1px;background:#a9a9a9"></div>
<div class="a" style="left:1866px;top:152px;width:38px;height:396px;background:#e3e3fd"></div>
<div class="a" style="left:1866px;top:152px;width:38px;height:15px;background:#377cbc"></div>
<div class="a" style="left:1904px;top:152px;width:2px;height:397px;background:#b0b0b0"></div>
<div class="a" style="left:1906px;top:152px;width:13px;height:396px;background:#dedede"></div>
<div class="a" style="left:1906px;top:152px;width:13px;height:14px;background:linear-gradient(90deg,#fbfbfb,#f0f0f0)"></div>
<div class="a" style="left:1906px;top:165px;width:13px;height:1px;background:#c8c8c8"></div>
<div class="a" style="left:1906px;top:166px;width:13px;height:245px;background:linear-gradient(90deg,#fbfbfb,#eeeeee)"></div>
<div class="a" style="left:1906px;top:411px;width:13px;height:1px;background:#c8c8c8"></div>
<div class="a" style="left:1906px;top:534px;width:13px;height:14px;background:linear-gradient(90deg,#fbfbfb,#f0f0f0)"></div>
<div class="a" style="left:1906px;top:534px;width:13px;height:1px;background:#c8c8c8"></div>
<div class="a" style="left:1919px;top:152px;width:1px;height:397px;background:#a9a9a9"></div>
<svg style="left:1906px;top:152px" width="13" height="396" viewBox="0 0 13 396"><path d="M3 9 H10 L6.5 5Z" fill="#3a3a3a"/><path d="M3 387 H10 L6.5 391Z" fill="#3a3a3a"/></svg>
<div class="a" style="left:0px;top:549px;width:1920px;height:4px;background:#ececec"></div>
<div class="a" style="left:0px;top:553px;width:958px;height:398px;background:#fff;border:1px solid #a9a9a9"></div>
<div class="a" style="left:21px;top:554px;width:936px;height:90px;background:#e9e9e9"></div>
<div class="m" style="left:24px;top:556px;color:#101010;font-size:15px;line-height:15px;">Frame 34: 76 bytes on wire (608 bits), 76 bytes captured (608 bits)</div>
<svg style="left:9px;top:559px" width="5" height="9" viewBox="0 0 5 9"><path d="M0 0 L4 4 L0 8Z" fill="#4a4a4a"/></svg>
<div class="m" style="left:24px;top:574px;color:#101010;font-size:15px;line-height:15px;">Linux cooked capture v1</div>
<svg style="left:9px;top:577px" width="5" height="9" viewBox="0 0 5 9"><path d="M0 0 L4 4 L0 8Z" fill="#4a4a4a"/></svg>
<div class="m" style="left:24px;top:592px;color:#101010;font-size:15px;line-height:15px;">Internet Protocol Version 4, Src: 192.168.196.16, Dst: 192.168.196.1</div>
<svg style="left:9px;top:595px" width="5" height="9" viewBox="0 0 5 9"><path d="M0 0 L4 4 L0 8Z" fill="#4a4a4a"/></svg>
<div class="m" style="left:24px;top:610px;color:#101010;font-size:15px;line-height:15px;">Transmission Control Protocol, Src Port: 21, Dst Port: 54411, Seq: 1, Ack: 1, Len: 20</div>
<svg style="left:9px;top:613px" width="5" height="9" viewBox="0 0 5 9"><path d="M0 0 L4 4 L0 8Z" fill="#4a4a4a"/></svg>
<div class="m" style="left:24px;top:628px;color:#101010;font-size:15px;line-height:15px;">File Transfer Protocol (FTP)</div>
<svg style="left:9px;top:631px" width="5" height="9" viewBox="0 0 5 9"><path d="M0 0 L4 4 L0 8Z" fill="#4a4a4a"/></svg>
<div class="m" style="left:24px;top:646px;color:#101010;font-size:15px;line-height:15px;">[Current working directory: ]</div>
<svg style="left:950px;top:548px" width="22" height="6"><g fill="#b8b8b8"><rect x="3" y="2" width="1" height="1"/><rect x="6" y="2" width="1" height="1"/><rect x="9" y="2" width="1" height="1"/><rect x="12" y="2" width="1" height="1"/><rect x="15" y="2" width="1" height="1"/><rect x="18" y="2" width="1" height="1"/></g></svg>
<div class="a" style="left:958px;top:553px;width:4px;height:398px;background:#ececec"></div>
<div class="a" style="left:962px;top:553px;width:958px;height:398px;background:#fff;border:1px solid #a9a9a9"></div>
<div class="a" style="left:963px;top:554px;width:54px;height:396px;background:#ececec"></div>
<div class="m" style="left:972px;top:556px;color:#9a9a9a;font-size:15px;line-height:15px;">0000</div>
<div class="m" style="left:1026px;top:556px;color:#101010;font-size:15px;line-height:15px;">00 04 00 01 00 06 00 0c  29 83 20 a6 00 00 08 00</div>
<div class="m" style="left:1485px;top:556px;color:#101010;font-size:15px;line-height:15px;"><span style="color:#9c9c9c">·</span><span style="color:#9c9c9c">·</span><span style="color:#9c9c9c">·</span><span style="color:#9c9c9c">·</span><span style="color:#9c9c9c">·</span><span style="color:#9c9c9c">·</span><span style="color:#9c9c9c">·</span><span style="color:#9c9c9c">·</span> )<span style="color:#9c9c9c">·</span> <span style="color:#9c9c9c">·</span><span style="color:#9c9c9c">·</span><span style="color:#9c9c9c">·</span><span style="color:#9c9c9c">·</span><span style="color:#9c9c9c">·</span></div>
<div class="m" style="left:972px;top:573px;color:#9a9a9a;font-size:15px;line-height:15px;">0010</div>
<div class="m" style="left:1026px;top:573px;color:#101010;font-size:15px;line-height:15px;">45 00 00 3c 73 74 40 00  40 06 bd e4 c0 a8 c4 10</div>
<div class="m" style="left:1485px;top:573px;color:#101010;font-size:15px;line-height:15px;">E<span style="color:#9c9c9c">·</span><span style="color:#9c9c9c">·</span>&lt;st@<span style="color:#9c9c9c">·</span> @<span style="color:#9c9c9c">·</span><span style="color:#9c9c9c">·</span><span style="color:#9c9c9c">·</span><span style="color:#9c9c9c">·</span><span style="color:#9c9c9c">·</span><span style="color:#9c9c9c">·</span><span style="color:#9c9c9c">·</span></div>
<div class="m" style="left:972px;top:590px;color:#9a9a9a;font-size:15px;line-height:15px;">0020</div>
<div class="m" style="left:1026px;top:590px;color:#101010;font-size:15px;line-height:15px;">c0 a8 c4 01 00 15 d4 8b  1b 22 5c d6 60 81 78 52</div>
<div class="m" style="left:1485px;top:590px;color:#101010;font-size:15px;line-height:15px;"><span style="color:#9c9c9c">·</span><span style="color:#9c9c9c">·</span><span style="color:#9c9c9c">·</span><span style="color:#9c9c9c">·</span><span style="color:#9c9c9c">·</span><span style="color:#9c9c9c">·</span><span style="color:#9c9c9c">·</span><span style="color:#9c9c9c">·</span> <span style="color:#9c9c9c">·</span>"\<span style="color:#9c9c9c">·</span>`<span style="color:#9c9c9c">·</span>xR</div>
<div class="m" style="left:972px;top:607px;color:#9a9a9a;font-size:15px;line-height:15px;">0030</div>
<div class="m" style="left:1026px;top:607px;color:#101010;font-size:15px;line-height:15px;">50 18 01 f6 09 92 00 00  32 32 30 20 28 76 73 46</div>
<div class="m" style="left:1485px;top:607px;color:#101010;font-size:15px;line-height:15px;">P<span style="color:#9c9c9c">·</span><span style="color:#9c9c9c">·</span><span style="color:#9c9c9c">·</span><span style="color:#9c9c9c">·</span><span style="color:#9c9c9c">·</span><span style="color:#9c9c9c">·</span><span style="color:#9c9c9c">·</span> 220 (vsF</div>
<div class="m" style="left:972px;top:624px;color:#9a9a9a;font-size:15px;line-height:15px;">0040</div>
<div class="m" style="left:1026px;top:624px;color:#101010;font-size:15px;line-height:15px;">54 50 64 20 33 2e 30 2e  33 29 0d 0a</div>
<div class="m" style="left:1485px;top:624px;color:#101010;font-size:15px;line-height:15px;">TPd 3.0. 3)<span style="color:#9c9c9c">·</span><span style="color:#9c9c9c">·</span></div>
<div class="a" style="left:0px;top:951px;width:1920px;height:24px;background:#ebebeb"></div>
<svg style="left:9px;top:955px" width="16" height="16" viewBox="0 0 16 16"><defs><radialGradient id="sc" cx="0.4" cy="0.3" r="0.8"><stop offset="0" stop-color="#d9f3f3"/><stop offset="1" stop-color="#8fd3d6"/></radialGradient></defs><circle cx="8" cy="8" r="6.6" fill="url(#sc)" stroke="#3f6e72" stroke-width="1"/></svg>
<svg style="left:33px;top:955px" width="16" height="16" viewBox="0 0 16 16"><rect x="0.5" y="1.5" width="11" height="13" fill="#f2f2ea" stroke="#c8c8c0" stroke-width="1"/><rect x="1" y="2" width="8" height="3" fill="#4a9be0"/><g stroke="#c8c8c0"><path d="M2 8 H9 M2 10 H9 M2 12 H9"/></g><path d="M4 10.5 L12.5 2 L14 3.5 L5.5 12 L3.5 12.5Z" fill="#3a3a3a"/></svg>
<div class="t" style="left:65px;top:956px;color:#000;font-size:15px;line-height:15px;transform:scaleX(0.9862);transform-origin:0 0;">File Transfer Protocol (FTP): Protocol</div>
<svg style="left:1247px;top:956px" width="2" height="18"><g fill="#b4b4b4"><rect x="0" y="1" width="1" height="1"/><rect x="0" y="3" width="1" height="1"/><rect x="0" y="5" width="1" height="1"/><rect x="0" y="7" width="1" height="1"/><rect x="0" y="9" width="1" height="1"/><rect x="0" y="11" width="1" height="1"/><rect x="0" y="13" width="1" height="1"/><rect x="0" y="15" width="1" height="1"/><rect x="0" y="17" width="1" height="1"/></g></svg>
<svg style="left:1798px;top:956px" width="2" height="18"><g fill="#b4b4b4"><rect x="0" y="1" width="1" height="1"/><rect x="0" y="3" width="1" height="1"/><rect x="0" y="5" width="1" height="1"/><rect x="0" y="7" width="1" height="1"/><rect x="0" y="9" width="1" height="1"/><rect x="0" y="11" width="1" height="1"/><rect x="0" y="13" width="1" height="1"/><rect x="0" y="15" width="1" height="1"/><rect x="0" y="17" width="1" height="1"/></g></svg>
<div class="t" style="left:1263px;top:956px;color:#000;font-size:15px;line-height:15px;transform:scaleX(0.9526);transform-origin:0 0;">Packets: 72 · Displayed: 25 (34.7%)</div>
<div class="t" style="left:1813px;top:956px;color:#000;font-size:15px;line-height:15px;">Profile: Default</div>
</div>
<div class="a" style="left:0px;top:975px;width:1920px;height:34px;background:#1a1311"></div>
<div class="a" style="left:0px;top:975px;width:1920px;height:34px;background:#2b313a;border-radius:0 0 18px 18px / 0 0 26px 26px"></div>
<div class="a" style="left:0px;top:975px;width:1920px;height:32px;background:#151c28;border-radius:0 0 17px 17px / 0 0 25px 25px"></div>
<div class="a" style="left:0px;top:975px;width:1920px;height:1px;background:#0b121c"></div>
<div class="a" style="left:1054px;top:975px;width:192px;height:32px;background:#10151c"></div>
<div class="a" style="left:1054px;top:1007px;width:192px;height:2px;background:#5b8fd9"></div>
<svg style="left:12px;top:982px" width="21" height="21"><g fill="#b6c1cf"><rect x="0" y="0" width="8" height="8"/><rect x="12" y="0" width="8" height="8"/><rect x="0" y="12" width="8" height="8"/><rect x="12" y="12" width="8" height="8"/></g></svg>
<div class="t" style="left:43px;top:984px;color:#aab6c4;font-size:15px;line-height:15px;">Menu</div>
<svg style="left:102px;top:983px" width="17" height="17" viewBox="0 0 22 22"><path d="M11 2.2 A9.8 9.8 0 1 1 1.6 8.5 L1.3 3 L3.3 5.4 Q6.5 2.2 11 2.2Z" fill="#f09a2c"/><circle cx="12.6" cy="9.6" r="7.6" fill="#2b8ae0"/><path d="M1.5 8.5 Q2.5 5 5 4.6 L6.8 5.5 Q5.8 8.5 7.5 10.2 L9.6 11.5 Q10.5 13.5 9 14.3 Q11 16.6 13.8 15.4 Q17.6 13.8 19.2 9.4 L20.7 8 Q21.6 12.8 19.5 16.4 Q16.5 21.2 10.8 21.2 Q5 21 2.4 16 Q0.8 12.5 1.5 8.5Z" fill="#f09a2c"/></svg>
<div class="t" style="left:127px;top:984px;color:#aab6c4;font-size:15px;line-height:15px;transform:scaleX(0.9701);transform-origin:0 0;">Security Dashboard ...</div>
<svg style="left:295px;top:985px" width="15" height="13"><rect x="0" y="0" width="15" height="13" fill="#3d4a52"/><rect x="2" y="2" width="2" height="1" fill="#ddd"/><rect x="4" y="4" width="2" height="1" fill="#ddd"/></svg>
<svg style="left:486px;top:985px" width="15" height="13"><rect x="0" y="0" width="15" height="13" fill="#3d4a52"/><rect x="2" y="2" width="2" height="1" fill="#ddd"/><rect x="4" y="4" width="2" height="1" fill="#ddd"/></svg>
<div class="t" style="left:318px;top:984px;color:#aab6c4;font-size:15px;line-height:15px;transform:scaleX(1.0251);transform-origin:0 0;">Parrot Terminal</div>
<div class="t" style="left:509px;top:984px;color:#aab6c4;font-size:15px;line-height:15px;transform:scaleX(1.0251);transform-origin:0 0;">Parrot Terminal</div>
<svg style="left:677px;top:984px" width="15" height="15" viewBox="0 0 15 15"><path d="M0 2 H6 L7 3.5 H15 V14 H0Z" fill="#29a6de"/><rect x="0" y="5" width="15" height="9" fill="#3fb6ea"/><path d="M7.5 8 V11.5 M6 10.2 L7.5 11.8 L9 10.2" stroke="#e8f6fc" stroke-width="1" fill="none"/></svg>
<div class="t" style="left:700px;top:984px;color:#aab6c4;font-size:15px;line-height:15px;transform:scaleX(0.9838);transform-origin:0 0;">Downloads</div>
<svg style="left:869px;top:983px" width="14" height="17" viewBox="0 0 14 17"><rect x="1" y="0" width="11" height="15" fill="#e8e8e8"/><circle cx="10" cy="13" r="3.8" fill="#e5473b"/><path d="M8.3 14.7 L11.7 11.3" stroke="#fff" stroke-width="1.2"/></svg>
<div class="t" style="left:891px;top:984px;color:#aab6c4;font-size:15px;line-height:15px;">nmap_initial.txt (~/Do...</div>
<svg style="left:1058px;top:984px" width="17" height="16" viewBox="0 0 17 16"><defs><linearGradient id="sf" x1="0" y1="0" x2="1" y2="1"><stop offset="0" stop-color="#5b9bf0"/><stop offset="1" stop-color="#1a3fae"/></linearGradient></defs><path d="M0.5 15 Q3 5 16 0.5 Q12.5 8 15 15Z" fill="url(#sf)"/></svg>
<div class="t" style="left:1082px;top:984px;color:#dfe6ee;font-size:15px;line-height:15px;transform:scaleX(0.9657);transform-origin:0 0;">0.pcap</div>
<svg style="left:1760px;top:975px" width="34" height="34" viewBox="1760 975 34 34"><path d="M1766.3 984 L1768 982.2 H1770 V1001.5 H1767.8 V984.6 Z" fill="#d3d9e0"/><path d="M1772 985 H1790 V998.5 H1789.5 V1002 H1786.5 V998.5 H1784.5 V1002 H1781.5 V998.5 H1779.5 V1002 H1776.5 V998.5 H1774.5 V1002 H1772 Z" fill="#d3d9e0"/><text x="1773.6" y="998" font-family="Liberation Sans" font-weight="bold" font-size="15" fill="#161c26">z</text><text x="1783.2" y="991.8" font-family="Liberation Sans" font-weight="bold" font-size="10" fill="#161c26">z</text></svg>
<div class="a" style="left:1797px;top:975px;width:30px;height:34px;background:#7ea8e4"></div>
<svg style="left:1804px;top:985px" width="17" height="16" viewBox="0 0 17 16"><path d="M0.5 15 Q3 5 16 0.5 Q12.5 8 15 15Z" fill="url(#sf)"/></svg>
<div class="a" style="left:1827px;top:976px;width:93px;height:33px;background:#1a1311"></div>
<div class="a" style="left:1827px;top:976px;width:93px;height:33px;background:#2a2b2e;border-bottom-right-radius:18px 26px"></div>
<div class="a" style="left:1827px;top:976px;width:93px;height:32px;background:#121316;border-bottom-right-radius:17px 25px"></div>
<div class="a" style="left:1858px;top:976px;width:1px;height:31px;background:#1a1c21"></div>
<div class="a" style="left:1889px;top:976px;width:1px;height:31px;background:#1a1c21"></div>
<svg style="left:700px;top:770px" width="36" height="36" viewBox="700 770 36 36"><defs><filter id="cs" x="-50%" y="-50%" width="200%" height="200%"><feGaussianBlur stdDeviation="0.9"/></filter></defs><path d="M711.5 778.5 L723.5 790 L720.5 792 L721.5 797.5 L718.5 798.8 L716 795 L711.5 795.5 Z" fill="#000" opacity="0.18" filter="url(#cs)" transform="translate(0.6 0.8)"/><path d="M711.2 777.6 L723.8 789.6 L720.6 791.8 L721.6 797.2 L718.6 798.4 L716.4 794.8 L711.2 795.2 Z" fill="#444" stroke="#d8d8d8" stroke-width="1.3" stroke-linejoin="round"/></svg></body></html>
